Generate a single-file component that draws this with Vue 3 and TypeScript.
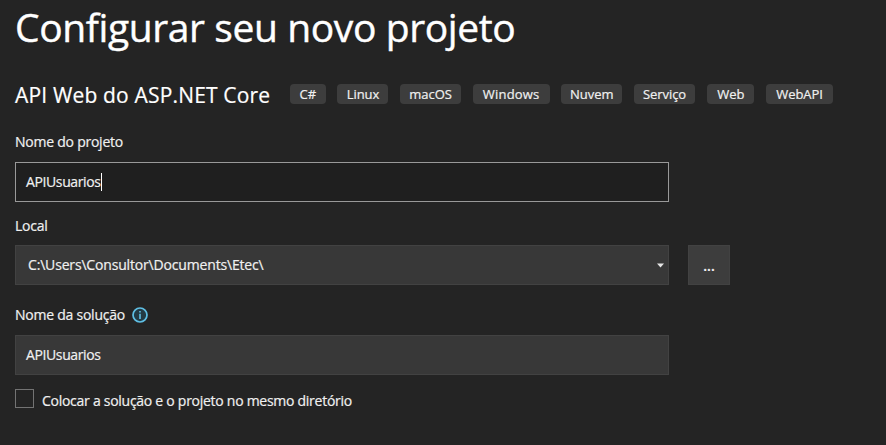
<script setup lang="ts">
import { ref } from 'vue'

const tags: string[] = ['C#', 'Linux', 'macOS', 'Windows', 'Nuvem', 'Serviço', 'Web', 'WebAPI']
const projectName = ref<string>('APIUsuarios')
const location = ref<string>('C:\\Users\\Consultor\\Documents\\Etec\\')
</script>

<template>
  <main class="dialog">
    <h1 class="title">Configurar seu novo projeto</h1>
    <div class="template-row">
      <h2 class="template-name">API Web do ASP.NET Core</h2>
      <ul class="tags">
        <li v-for="(tag, i) in tags" :key="tag" class="tag" :class="`tag-${i}`"><span>{{ tag }}</span></li>
      </ul>
    </div>

    <div class="label label-project"><span>Nome do projeto</span></div>
    <div class="field focused"><span class="name">{{ projectName }}</span><i class="caret"></i></div>

    <div class="label label-local"><span>Local</span></div>
    <div class="location-row">
      <div class="field combo">
        <span class="path">{{ location }}</span>
        <svg class="arrow" width="7" height="5" viewBox="0 0 7 5"><path d="M0 .5h7L3.5 4.5z" fill="#e6e6e6" /></svg>
      </div>
      <button class="browse">...</button>
    </div>

    <div class="label label-solution">
      <span class="solution">Nome da solução</span>
      <svg class="info" width="16" height="16" viewBox="0 0 16 16">
        <circle cx="8" cy="8" r="7" fill="#233a43" stroke="#5fbfe4" stroke-width="1.7" />
        <path d="M7.2 4h1.6v1.6H7.2zM7.2 6.8h1.6V12H7.2z" fill="#5fbfe4" />
      </svg>
    </div>
    <div class="field"><span class="name">{{ projectName }}</span></div>

    <div class="check-row">
      <i class="checkbox"></i>
      <span class="check-text">Colocar a solução e o projeto no mesmo diretório</span>
    </div>
  </main>
</template>

<style>
body {
  background: #242424;
}
</style>

<style scoped>
.dialog {
  box-sizing: border-box;
  width: 886px;
  height: 445px;
  padding: 0 15px;
  overflow: hidden;
  background: #242424;
  color: #f0f0f0;
  font-family: "Open Sans", "Noto Sans", sans-serif;
  font-size: 14px;
  font-weight: 500;
  line-height: 20px;
  letter-spacing: -0.24px;
  white-space: nowrap;
  -webkit-text-stroke: 0.2px currentColor;
}
.title {
  box-sizing: border-box;
  height: 84px;
  margin: 0;
  font-size: 39px;
  line-height: 54px;
  font-weight: 400;
  letter-spacing: -0.4px;
  color: #fff;
  -webkit-text-stroke-width: 0.4px;
}
.template-row {
  display: flex;
  height: 20px;
}
.template-name {
  flex: none;
  width: 275px;
  margin: 0;
  font-size: 21px;
  line-height: 22px;
  font-weight: 400;
  letter-spacing: 0.17px;
  color: #fff;
}
.tags {
  display: flex;
  gap: 11.8px;
  margin: 0;
  padding: 0;
  list-style: none;
}
.tag {
  display: flex;
  justify-content: center;
  height: 20px;
  border-radius: 4px;
  background: #3d3d3d;
  font-size: 13px;
  line-height: 21px;
  letter-spacing: -0.06px;
}
.tag-0 { width: 35.7px; }
.tag-1 { width: 51px; }
.tag-2 { width: 60.6px; }
.tag-3 { width: 77px; }
.tag-4 { width: 60.6px; }
.tag-5 { width: 61.4px; }
.tag-6 { width: 47.4px; }
.tag-7 { width: 66.7px; }
.tag-3 span { letter-spacing: 0.2px; }
.label {
  display: flex;
  align-items: center;
  height: 20px;
}
.label-project { margin: 28px 0 10px; }
.label-local { margin: 14px 0 9px; }
.label-solution { margin: 20px 0 10px; gap: 7px; }
.field {
  box-sizing: border-box;
  display: flex;
  align-items: center;
  width: 654px;
  height: 40px;
  padding-left: 10px;
  border: 1px solid #424242;
  background: #383838;
}
.focused {
  border-color: #999;
  background: #1f1f1f;
}
.name {
  letter-spacing: -0.38px;
}
.path {
  letter-spacing: -0.17px;
}
.caret {
  width: 1px;
  height: 18px;
  background: #fff;
}
.location-row {
  display: flex;
  gap: 19px;
}
.combo {
  justify-content: space-between;
  padding: 0 4px 0 12px;
}
.browse {
  width: 42px;
  height: 40px;
  padding: 1px 0 0;
  border: 1px solid #424242;
  background: #3d3d3d;
  color: #fafafa;
  font: inherit;
  font-weight: 600;
}
.check-row {
  display: flex;
  gap: 8px;
  margin-top: 14px;
}
.checkbox {
  box-sizing: border-box;
  width: 19px;
  height: 19px;
  border: 1px solid #737373;
}
.check-text {
  line-height: 24px;
  letter-spacing: -0.27px;
}
</style>
